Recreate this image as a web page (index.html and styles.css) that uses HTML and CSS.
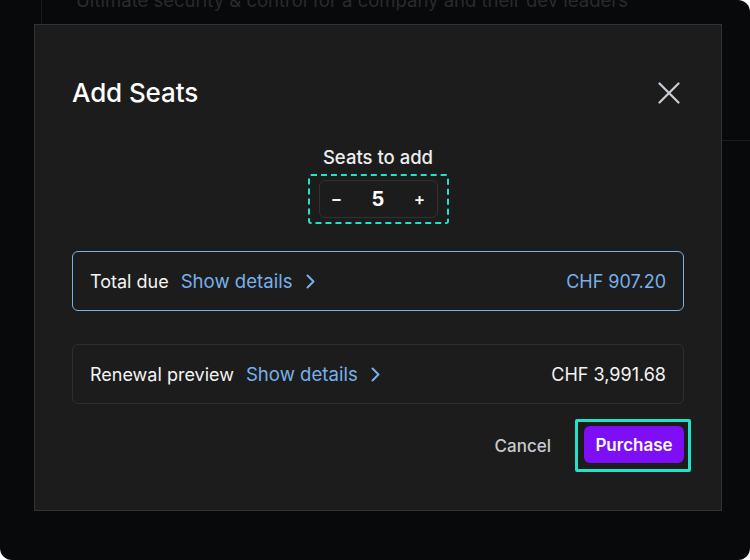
FILE: index.html
```html
<!DOCTYPE html>
<html lang="en">
<head>
<meta charset="utf-8">
<title>Add Seats</title>
<link rel="stylesheet" href="styles.css">
</head>
<body>
<div class="screen">
  <div class="bg-page">
    <div class="bg-main">
      <p class="bg-text">Ultimate security &amp; control for a company and their dev leaders</p>
    </div>
  </div>

  <div class="modal" role="dialog" aria-labelledby="modal-title">
    <div class="modal-header">
      <h2 id="modal-title" class="modal-title">Add Seats</h2>
      <button class="close-btn" aria-label="Close">
        <svg width="22" height="22" viewBox="0 0 22 22" fill="none" stroke="currentColor" stroke-width="2.2" stroke-linecap="round">
          <path d="M1.5 1.5 L20.5 20.5 M20.5 1.5 L1.5 20.5"/>
        </svg>
      </button>
    </div>

    <div class="seats">
      <div class="seats-label">Seats to add</div>
      <div class="stepper-focus">
        <div class="stepper">
          <button class="step-btn" aria-label="Decrease">&minus;</button>
          <span class="step-value">5</span>
          <button class="step-btn" aria-label="Increase">+</button>
        </div>
      </div>
    </div>

    <div class="card card-active">
      <div class="card-left">
        <span class="card-label">Total due</span>
        <a class="details-link" href="#">Show details
          <svg class="chev" width="9" height="15" viewBox="0 0 9 15" fill="none" stroke="currentColor" stroke-width="2" stroke-linecap="round" stroke-linejoin="round"><path d="M1.5 1.5 L7.5 7.5 L1.5 13.5"/></svg>
        </a>
      </div>
      <span class="card-amount amount-blue">CHF 907.20</span>
    </div>

    <div class="card card-renewal">
      <div class="card-left">
        <span class="card-label">Renewal preview</span>
        <a class="details-link" href="#">Show details
          <svg class="chev" width="9" height="15" viewBox="0 0 9 15" fill="none" stroke="currentColor" stroke-width="2" stroke-linecap="round" stroke-linejoin="round"><path d="M1.5 1.5 L7.5 7.5 L1.5 13.5"/></svg>
        </a>
      </div>
      <span class="card-amount">CHF 3,991.68</span>
    </div>

    <div class="modal-footer">
      <button class="btn-cancel">Cancel</button>
      <div class="purchase-focus">
        <button class="btn-purchase">Purchase</button>
      </div>
    </div>
  </div>
</div>
</body>
</html>
```

FILE: styles.css
```css
* { box-sizing: border-box; }

html, body {
  margin: 0;
  padding: 0;
  background: #ffffff;
  width: 750px;
  height: 560px;
  overflow: hidden;
  font-family: Inter, "Noto Sans", "Liberation Sans", sans-serif;
}

.screen {
  position: relative;
  width: 750px;
  height: 560px;
  background: #08090b;
  border-radius: 0 12px 12px 12px;
  overflow: hidden;
}

.bg-page {
  padding-left: 41px;
}

.bg-main {
  height: 141px;
  border-left: 1px solid #1b1c20;
  border-bottom: 1px solid #1c1d21;
  overflow: hidden;
}

.bg-text {
  margin: -11px 0 0 34px;
  font-size: 18.5px;
  line-height: 22px;
  color: #2a2b2f;
  white-space: nowrap;
}

.modal {
  position: absolute;
  left: 34px;
  top: 24px;
  width: 688px;
  height: 487px;
  background: #1c1c1c;
  border: 1px solid #333333;
  padding: 51px 37px 0 37px;
  display: flex;
  flex-direction: column;
}

.modal-header {
  display: flex;
  align-items: center;
  justify-content: space-between;
  height: 34px;
}

.modal-title {
  margin: 0;
  font-size: 26px;
  font-weight: 500;
  color: #ffffff;
  line-height: 34px;
  letter-spacing: -0.1px;
}

.close-btn {
  background: none;
  border: 0;
  padding: 0;
  margin-right: 4px;
  color: #c9cdd5;
  width: 22px;
  height: 22px;
  display: flex;
}

.seats {
  margin-top: 36px;
  display: flex;
  flex-direction: column;
  align-items: center;
}

.seats-label {
  font-size: 18.5px;
  font-weight: 500;
  line-height: 22px;
  color: #ededed;
}

.stepper-focus {
  margin-top: 6px;
  border: 2px dashed #22e3c8;
  border-radius: 3px;
  padding: 4px 9px;
}

.stepper {
  width: 119px;
  height: 38px;
  border: 1px solid #323232;
  border-radius: 6px;
  display: grid;
  grid-template-columns: 34px 1fr 34px;
  align-items: center;
}

.step-btn {
  background: none;
  border: 0;
  padding: 0;
  color: #f2f2f2;
  font-family: inherit;
  font-size: 17px;
  font-weight: 600;
  line-height: 36px;
  text-align: center;
}

.step-value {
  text-align: center;
  font-size: 20px;
  font-weight: 700;
  color: #ffffff;
}

.card {
  height: 60px;
  border-radius: 6px;
  padding: 0 17px;
  display: flex;
  align-items: center;
  justify-content: space-between;
  font-size: 18px;
}

.card-active {
  margin-top: 27px;
  border: 1px solid #7ab1e6;
}

.card-renewal {
  margin-top: 33px;
  border: 1px solid #2f2f2f;
}

.card-left {
  display: flex;
  align-items: center;
  gap: 12px;
}

.card-label {
  color: #f4f4f4;
}

.details-link {
  color: #77b0ea;
  text-decoration: none;
  font-size: 18.6px;
  display: flex;
  align-items: center;
  gap: 13px;
}

.chev { display: block; }

.card-amount {
  color: #f4f4f4;
}

.amount-blue {
  color: #77b0ea;
}

.modal-footer {
  margin-top: 15px;
  display: flex;
  justify-content: flex-end;
  align-items: center;
  gap: 24px;
}

.btn-cancel {
  background: none;
  border: 0;
  padding: 0;
  font-family: inherit;
  font-size: 17px;
  font-weight: 500;
  color: #c8cacf;
}

.purchase-focus {
  margin-right: -7px;
  border: 3px solid #22e3c8;
  border-radius: 2px;
  padding: 4px 4px 6px 6px;
}

.btn-purchase {
  display: block;
  height: 37px;
  width: 100px;
  padding: 0;
  border: 0;
  border-radius: 6px;
  background: #7d0ef5;
  color: #ffffff;
  font-family: inherit;
  font-size: 17px;
  font-weight: 600;
}
```
